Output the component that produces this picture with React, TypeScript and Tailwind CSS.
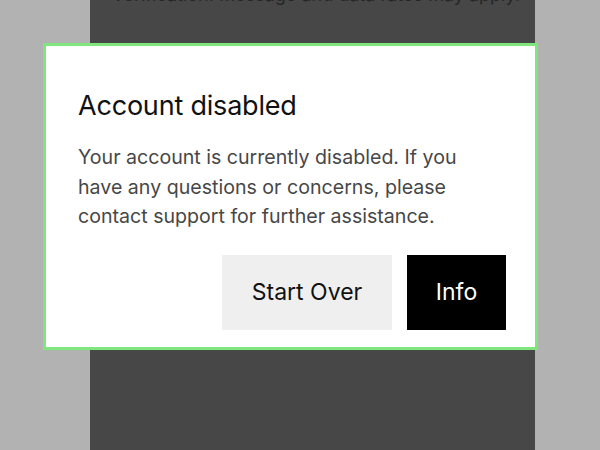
export default function App() {
  return (
    <div
      className="relative w-[600px] h-[450px] overflow-hidden bg-[#b2b2b2]"
      style={{ fontFamily: "Inter, 'Liberation Sans', sans-serif" }}
    >
      <div className="ml-[90px] w-[445px] h-[450px] bg-[#474747] pl-[22px] pt-px overflow-hidden">
        <p className="mt-[-17px] text-[18px] leading-[22px] text-[#262626]">
          Verification. Message and data rates may apply.
        </p>
      </div>
      <div className="absolute left-[43px] top-[43px] w-[495px] h-[307px] border-[3px] border-[#7ee67d] bg-white">
        <div className="pl-[32px] pr-[29px] pt-[44px]">
          <h1 className="text-[27px] leading-[32px] text-[#111] tracking-[-0.2px]">Account disabled</h1>
          <p className="mt-[21px] text-[19.6px] leading-[29.5px] text-[#474747]">
            Your account is currently disabled. If you
            <br />
            have any questions or concerns, please
            <br />
            contact support for further assistance.
          </p>
          <div className="mt-[23px] flex justify-end gap-[15px]">
            <div className="w-[170px] h-[75px] bg-[#efefef] flex items-center justify-center text-[23px] text-[#111]">
              Start Over
            </div>
            <div className="w-[99px] h-[75px] bg-black flex items-center justify-center text-[23px] text-white">
              Info
            </div>
          </div>
        </div>
      </div>
    </div>
  );
}
